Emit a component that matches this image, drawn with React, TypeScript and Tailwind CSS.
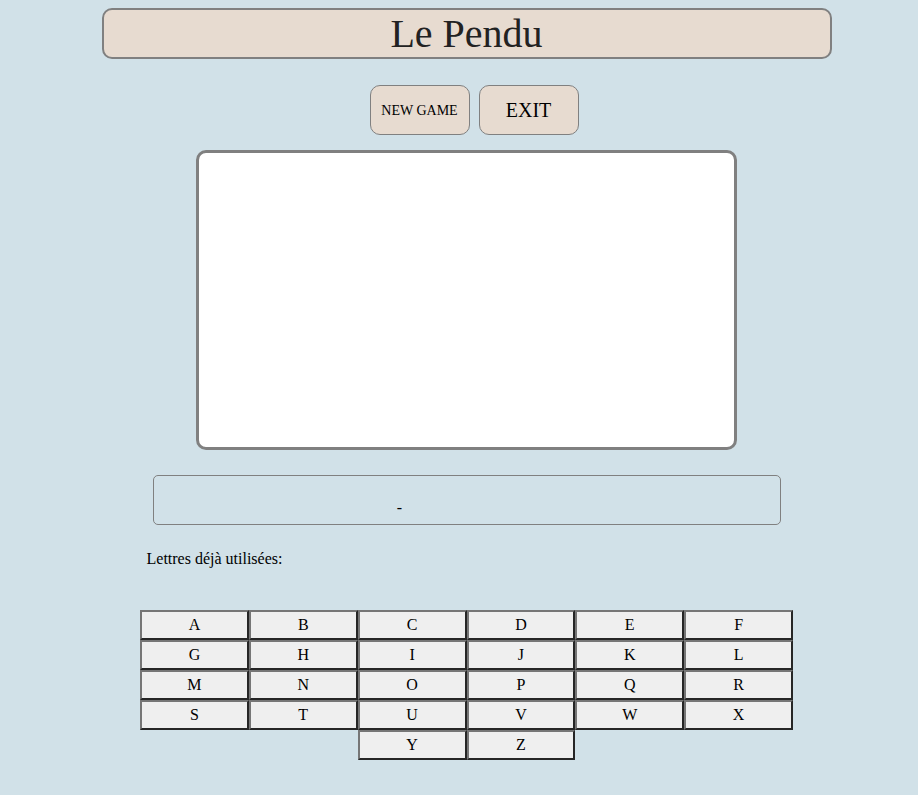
import React from "react";

const rows = [
  ["A", "B", "C", "D", "E", "F"],
  ["G", "H", "I", "J", "K", "L"],
  ["M", "N", "O", "P", "Q", "R"],
  ["S", "T", "U", "V", "W", "X"],
];

function Key({ l, extra = "" }: { l: string; extra?: string }) {
  return (
    <button
      className={`h-[30px] bg-[#efefef] border-2 border-t-[#767676] border-l-[#767676] border-b-[#262626] border-r-[#262626] text-[16px] text-black leading-none ${extra}`}
      style={{ fontFamily: '"Liberation Serif", serif' }}
    >
      {l}
    </button>
  );
}

export default function App() {
  return (
    <div
      className="min-h-[795px] w-full bg-[#d1e1e8] text-[#222]"
      style={{ fontFamily: '"Liberation Serif", "Times New Roman", serif' }}
    >
      <div className="pl-[15px] pt-[8px] flex flex-col items-center">
        <div className="w-[730px] h-[51px] bg-[#e7dbd0] border-2 border-[#808080] rounded-[10px] flex items-center justify-center">
          <span className="text-[40px] leading-none">Le Pendu</span>
        </div>
        <div className="mt-[26px] flex gap-[9px] ml-[15px]">
          <button className="w-[100px] h-[50px] bg-[#e7dbd0] border border-[#808080] rounded-[10px] text-[14px] text-black">
            NEW GAME
          </button>
          <button className="w-[100px] h-[50px] bg-[#e7dbd0] border border-[#808080] rounded-[10px] text-[20px] text-black">
            EXIT
          </button>
        </div>
        <div className="mt-[15px] w-[541px] h-[300px] bg-white border-[3px] border-[#808080] rounded-[10px]" />
        <div className="mt-[25px] w-[628px] h-[50px] border border-[#808080] rounded-[5px] flex items-end justify-center pb-[8px]">
          <span className="text-[16px] text-black leading-none mr-[134px]">-</span>
        </div>
        <div className="w-[652px] mt-[22px] text-[16px] text-black pl-[6px]">
          Lettres déjà utilisées:
        </div>
        <div className="mt-[39px] w-[653px] grid grid-cols-6">
          {rows.map((r) => r.map((l) => <Key key={l} l={l} />))}
          <Key l="Y" extra="col-start-3" />
          <Key l="Z" />
        </div>
      </div>
    </div>
  );
}
